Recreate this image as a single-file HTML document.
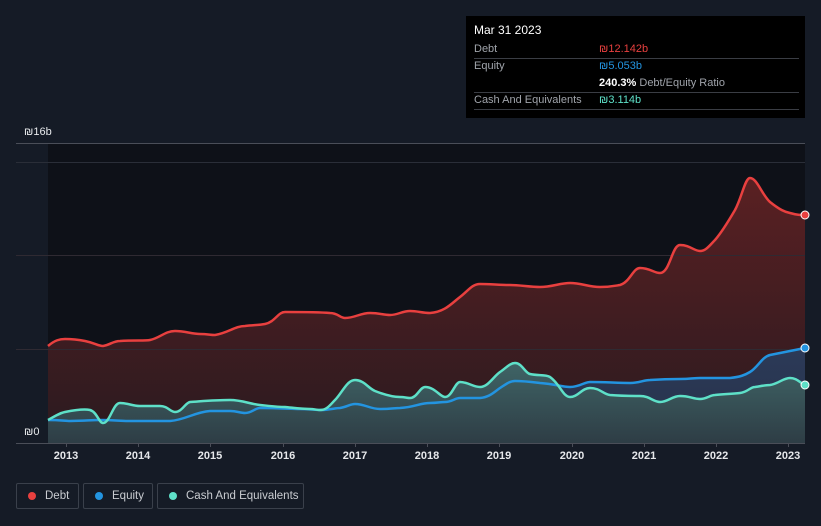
<!DOCTYPE html>
<html><head><meta charset="utf-8"><style>
body{margin:0;background:#151b26;width:821px;height:526px;overflow:hidden;font-family:"Liberation Sans","DejaVu Sans",sans-serif;position:relative}
.tt{position:absolute;left:466px;top:16px;width:339px;height:102px;background:#000;color:#fff;font-size:11px}
.tt .r{position:absolute;left:8px;right:6px;height:17px;line-height:17px;border-bottom:1px solid #3a3d44}
.tt .l{color:#a0a4ab;position:absolute;left:0}
.tt .v{position:absolute;left:125px}
.leg{position:absolute;top:483px;height:26px;border:1px solid #3a404b;border-radius:2px;color:#c9ccd1;font-size:11.5px;line-height:25px;box-sizing:border-box;white-space:nowrap}
.leg i{position:absolute;left:11px;top:8px;width:8px;height:8px;border-radius:50%}
.leg span{position:absolute;left:28px}
.ax{position:absolute;top:450px;color:#e6e8eb;font-size:11px;font-weight:bold;width:40px;text-align:center}
</style></head><body>
<svg width="821" height="526" style="position:absolute;left:0;top:0">
<defs>
<linearGradient id="gd" x1="0" y1="0" x2="0" y2="1"><stop offset="0" stop-color="#5a2022"/><stop offset="1" stop-color="#2a1a20"/></linearGradient>
<linearGradient id="ge" x1="0" y1="0" x2="0" y2="1"><stop offset="0" stop-color="#2c3a58"/><stop offset="1" stop-color="#26324a"/></linearGradient>
<linearGradient id="gc" x1="0" y1="0" x2="0" y2="1"><stop offset="0" stop-color="#3f6466"/><stop offset="1" stop-color="#2e3d45"/></linearGradient>
</defs>
<rect x="48" y="143" width="757" height="300" fill="#0e1118"/>
<path d="M48,346 C55,340 60,339 65,339 C75,339 80,340 85,341 C95,343 98,346 103,346 C110,345 113,341 120,341 C135,340 145,341 150,340 C160,338 165,331 175,331 C185,331 192,334 200,334 C208,334 210,335 215,335 C228,333 235,326 245,326 C255,325 260,325 265,324 C275,322 278,312 285,312 C300,312 318,312 330,313 C338,313 340,318 345,318 C355,318 360,313 370,313 C380,313 383,315 390,315 C398,315 402,311 410,311 C418,311 422,313 430,313 C445,312 452,303 460,297 C468,291 472,284 480,284 C490,284 500,285 510,285 C520,285 530,287 540,287 C552,287 560,283 570,283 C582,283 588,287 600,287 C610,287 614,286 620,285 C630,282 633,268 640,268 C650,268 654,273 660,273 C670,273 672,245 680,245 C690,245 694,251 700,251 C706,251 710,245 715,240 C722,232 728,222 735,210 C742,197 745,178 750,178 C757,178 762,195 770,202 C780,210 785,212 790,213 C797,215 800,215 805,215 L805,443 L48,443 Z" fill="url(#gd)"/>
<path d="M48,420 C60,420 65,421 70,421 C85,421 90,420 100,420 C115,420 120,421 130,421 C150,421 160,421 170,421 C185,420 195,412 210,411 C220,411 225,411 230,411 C237,411 240,413 245,413 C252,413 255,408 260,408 C280,408 290,409 300,409 C310,409 315,410 320,410 C330,410 335,408 340,408 C347,407 350,404 355,404 C365,404 370,409 380,409 C390,409 395,408 400,408 C415,407 420,403 430,403 C438,403 440,402 445,402 C452,402 455,398 460,398 C470,398 475,398 480,398 C490,397 494,392 500,388 C506,384 510,381 515,381 C525,381 532,382 540,383 C555,384 562,387 570,387 C580,387 584,382 590,382 C605,382 618,383 630,383 C640,383 643,380 650,380 C665,379 670,379 680,379 C690,379 694,378 700,378 C715,378 720,378 730,378 C740,377 745,375 750,372 C758,367 762,357 770,355 C785,352 795,350 805,348 L805,443 L48,443 Z" fill="url(#ge)"/>
<path d="M48,420 C55,416 60,413 65,412 C75,410 85,409 90,410 C97,412 99,423 103,423 C110,423 113,403 120,403 C128,403 132,406 140,406 C150,406 155,406 160,406 C168,406 170,412 175,412 C182,412 185,403 190,402 C205,401 215,400 230,400 C242,400 250,404 260,405 C270,406 278,407 285,407 C295,408 302,409 310,409 C314,409 317,410 320,410 C327,410 330,405 335,400 C342,393 347,380 355,380 C364,380 368,388 375,391 C385,395 392,397 400,397 C405,397 407,398 410,398 C417,398 420,387 425,387 C435,387 440,397 445,397 C452,397 455,382 460,382 C468,382 473,387 480,387 C488,387 493,377 500,372 C506,368 510,363 515,363 C522,363 525,373 530,374 C538,376 545,374 550,377 C560,384 563,397 570,397 C578,397 582,388 590,388 C600,388 603,394 610,395 C622,396 630,396 640,396 C650,396 653,402 660,402 C668,402 672,396 680,396 C690,396 693,399 700,399 C707,399 710,395 715,395 C725,394 732,394 740,393 C748,392 750,387 755,387 C762,386 765,385 770,385 C778,384 783,378 790,378 C797,378 800,383 805,385 L805,443 L48,443 Z" fill="url(#gc)"/>
<g stroke="#3a3e48" stroke-width="1">
<line x1="16" y1="143.5" x2="805" y2="143.5" stroke="#4a4e58"/>
<line x1="16" y1="162.5" x2="805" y2="162.5" stroke="#2a2e38"/>
<line x1="16" y1="255.5" x2="805" y2="255.5" stroke="#2f2a32"/>
<line x1="16" y1="349.5" x2="805" y2="349.5" stroke="#2f2a32"/>
<line x1="16" y1="443.5" x2="805" y2="443.5" stroke="#4a4e58"/>
</g>
<g stroke="#4a4e58"><line x1="66.5" y1="443" x2="66.5" y2="447"/><line x1="138.5" y1="443" x2="138.5" y2="447"/><line x1="210.5" y1="443" x2="210.5" y2="447"/><line x1="283.5" y1="443" x2="283.5" y2="447"/><line x1="355.5" y1="443" x2="355.5" y2="447"/><line x1="427.5" y1="443" x2="427.5" y2="447"/><line x1="499.5" y1="443" x2="499.5" y2="447"/><line x1="572.5" y1="443" x2="572.5" y2="447"/><line x1="644.5" y1="443" x2="644.5" y2="447"/><line x1="716.5" y1="443" x2="716.5" y2="447"/><line x1="788.5" y1="443" x2="788.5" y2="447"/></g>
<path fill="none" stroke="#e8403f" stroke-width="2.5" d="M48,346 C55,340 60,339 65,339 C75,339 80,340 85,341 C95,343 98,346 103,346 C110,345 113,341 120,341 C135,340 145,341 150,340 C160,338 165,331 175,331 C185,331 192,334 200,334 C208,334 210,335 215,335 C228,333 235,326 245,326 C255,325 260,325 265,324 C275,322 278,312 285,312 C300,312 318,312 330,313 C338,313 340,318 345,318 C355,318 360,313 370,313 C380,313 383,315 390,315 C398,315 402,311 410,311 C418,311 422,313 430,313 C445,312 452,303 460,297 C468,291 472,284 480,284 C490,284 500,285 510,285 C520,285 530,287 540,287 C552,287 560,283 570,283 C582,283 588,287 600,287 C610,287 614,286 620,285 C630,282 633,268 640,268 C650,268 654,273 660,273 C670,273 672,245 680,245 C690,245 694,251 700,251 C706,251 710,245 715,240 C722,232 728,222 735,210 C742,197 745,178 750,178 C757,178 762,195 770,202 C780,210 785,212 790,213 C797,215 800,215 805,215"/>
<path fill="none" stroke="#2394e0" stroke-width="2.5" d="M48,420 C60,420 65,421 70,421 C85,421 90,420 100,420 C115,420 120,421 130,421 C150,421 160,421 170,421 C185,420 195,412 210,411 C220,411 225,411 230,411 C237,411 240,413 245,413 C252,413 255,408 260,408 C280,408 290,409 300,409 C310,409 315,410 320,410 C330,410 335,408 340,408 C347,407 350,404 355,404 C365,404 370,409 380,409 C390,409 395,408 400,408 C415,407 420,403 430,403 C438,403 440,402 445,402 C452,402 455,398 460,398 C470,398 475,398 480,398 C490,397 494,392 500,388 C506,384 510,381 515,381 C525,381 532,382 540,383 C555,384 562,387 570,387 C580,387 584,382 590,382 C605,382 618,383 630,383 C640,383 643,380 650,380 C665,379 670,379 680,379 C690,379 694,378 700,378 C715,378 720,378 730,378 C740,377 745,375 750,372 C758,367 762,357 770,355 C785,352 795,350 805,348"/>
<path fill="none" stroke="#5ee0c8" stroke-width="2.5" d="M48,420 C55,416 60,413 65,412 C75,410 85,409 90,410 C97,412 99,423 103,423 C110,423 113,403 120,403 C128,403 132,406 140,406 C150,406 155,406 160,406 C168,406 170,412 175,412 C182,412 185,403 190,402 C205,401 215,400 230,400 C242,400 250,404 260,405 C270,406 278,407 285,407 C295,408 302,409 310,409 C314,409 317,410 320,410 C327,410 330,405 335,400 C342,393 347,380 355,380 C364,380 368,388 375,391 C385,395 392,397 400,397 C405,397 407,398 410,398 C417,398 420,387 425,387 C435,387 440,397 445,397 C452,397 455,382 460,382 C468,382 473,387 480,387 C488,387 493,377 500,372 C506,368 510,363 515,363 C522,363 525,373 530,374 C538,376 545,374 550,377 C560,384 563,397 570,397 C578,397 582,388 590,388 C600,388 603,394 610,395 C622,396 630,396 640,396 C650,396 653,402 660,402 C668,402 672,396 680,396 C690,396 693,399 700,399 C707,399 710,395 715,395 C725,394 732,394 740,393 C748,392 750,387 755,387 C762,386 765,385 770,385 C778,384 783,378 790,378 C797,378 800,383 805,385"/>
<circle cx="805" cy="215" r="4" fill="#e8403f" stroke="#fff" stroke-width="1"/>
<circle cx="805" cy="348" r="4" fill="#2394e0" stroke="#fff" stroke-width="1"/>
<circle cx="805" cy="385" r="4" fill="#5ee0c8" stroke="#fff" stroke-width="1"/>
<text x="24" y="135" fill="#e6e8eb" font-size="11" font-family="Liberation Sans, DejaVu Sans, sans-serif">₪16b</text>
<text x="24" y="435" fill="#e6e8eb" font-size="11" font-family="Liberation Sans, DejaVu Sans, sans-serif">₪0</text>
</svg>
<div class="ax" style="left:46px">2013</div><div class="ax" style="left:118px">2014</div><div class="ax" style="left:190px">2015</div><div class="ax" style="left:263px">2016</div><div class="ax" style="left:335px">2017</div><div class="ax" style="left:407px">2018</div><div class="ax" style="left:479px">2019</div><div class="ax" style="left:552px">2020</div><div class="ax" style="left:624px">2021</div><div class="ax" style="left:696px">2022</div><div class="ax" style="left:768px">2023</div>
<div class="tt">
<div style="position:absolute;left:8px;top:7px;font-size:12px">Mar 31 2023</div>
<div class="r" style="top:25px"><span class="l">Debt</span><span class="v" style="color:#e8403f">₪12.142b</span></div>
<div class="r" style="top:42px;border:none"><span class="l">Equity</span><span class="v" style="color:#2394e0">₪5.053b</span></div>
<div class="r" style="top:59px"><span class="v"><b>240.3%</b> <span style="color:#a0a4ab">Debt/Equity Ratio</span></span></div>
<div class="r" style="top:76px"><span class="l">Cash And Equivalents</span><span class="v" style="color:#5ee0c8">₪3.114b</span></div>
</div>
<div class="leg" style="left:16px;width:63px"><i style="background:#e8403f"></i><span>Debt</span></div>
<div class="leg" style="left:83px;width:70px"><i style="background:#2394e0"></i><span>Equity</span></div>
<div class="leg" style="left:157px;width:147px"><i style="background:#5ee0c8"></i><span>Cash And Equivalents</span></div>
</body></html>
